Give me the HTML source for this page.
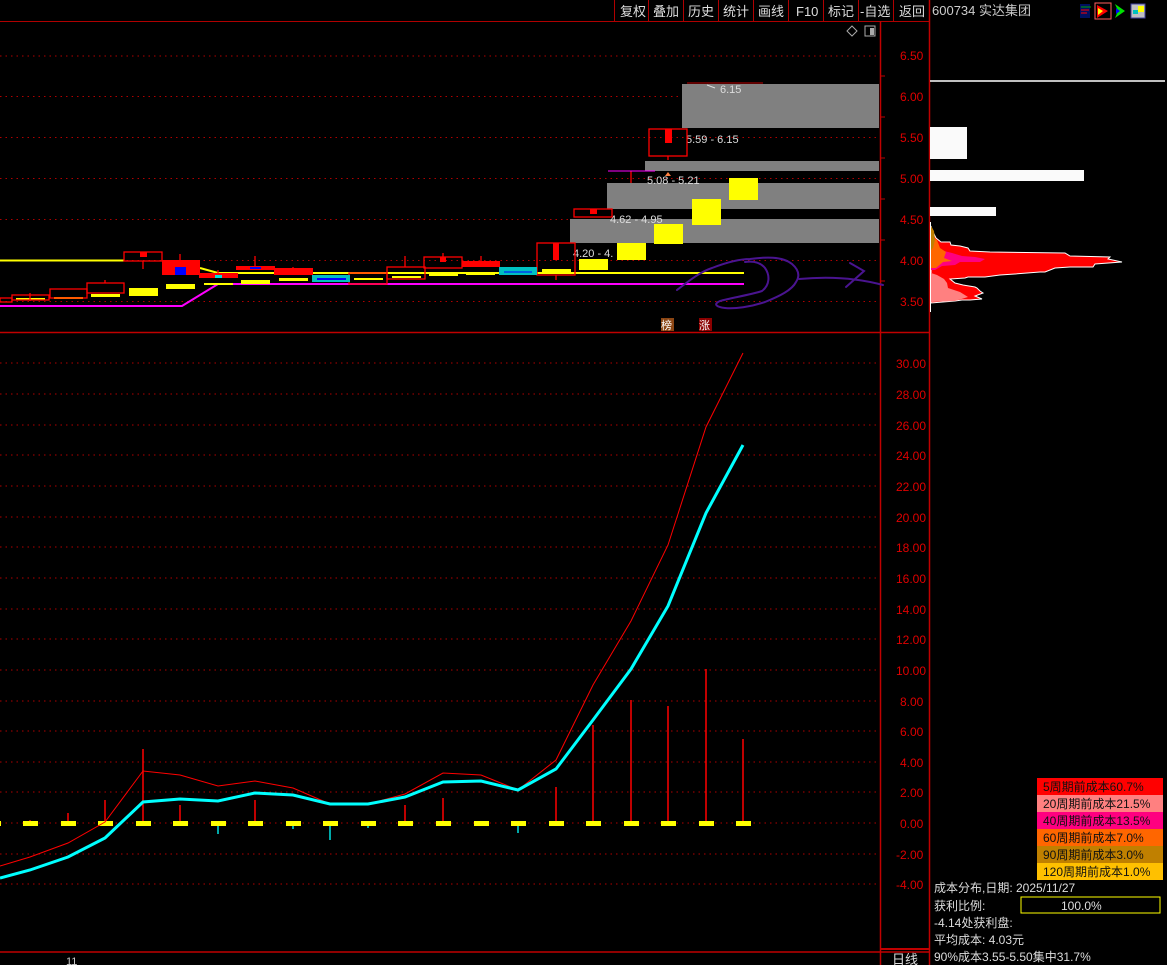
<!DOCTYPE html>
<html><head><meta charset="utf-8"><style>
body{margin:0;background:#000;width:1167px;height:965px;overflow:hidden;font-family:"Liberation Sans","Noto Sans CJK SC",sans-serif}
svg{position:absolute;left:0;top:0}
text{font-family:"Liberation Sans","Noto Sans CJK SC",sans-serif}
</style></head><body>
<svg width="1167" height="965" viewBox="0 0 1167 965">
<rect width="1167" height="965" fill="#000"/>
<g stroke="#b00000" stroke-width="1">
<line x1="0" y1="21.5" x2="929" y2="21.5"/>
<line x1="614.5" y1="0" x2="614.5" y2="21"/><line x1="648.5" y1="0" x2="648.5" y2="21"/><line x1="683.5" y1="0" x2="683.5" y2="21"/><line x1="718.5" y1="0" x2="718.5" y2="21"/><line x1="753.5" y1="0" x2="753.5" y2="21"/><line x1="788.5" y1="0" x2="788.5" y2="21"/><line x1="823.5" y1="0" x2="823.5" y2="21"/><line x1="858.5" y1="0" x2="858.5" y2="21"/><line x1="893.5" y1="0" x2="893.5" y2="21"/>
</g>
<g fill="#ddd" font-size="13">
<text x="620" y="16">复权</text><text x="653" y="16">叠加</text><text x="688" y="16">历史</text><text x="723" y="16">统计</text><text x="758" y="16">画线</text><text x="796" y="16">F10</text><text x="828" y="16">标记</text><text x="860" y="16">-自选</text><text x="899" y="16">返回</text>
</g>
<path d="M852 26l5 5-5 5-5-5z" fill="none" stroke="#aaa"/>
<rect x="865" y="26" width="10" height="10" fill="none" stroke="#aaa"/><rect x="870" y="28" width="4" height="7" fill="#aaa"/>
<g stroke="#c00000" stroke-width="1.5">
<line x1="880.5" y1="21" x2="880.5" y2="965"/><line x1="929.5" y1="0" x2="929.5" y2="965"/>
<line x1="0" y1="332.5" x2="929" y2="332.5"/><line x1="0" y1="952" x2="929" y2="952"/>
</g>
<line x1="880" y1="949" x2="929" y2="949" stroke="#c00000" stroke-width="2"/>
<g stroke="#b00000" stroke-dasharray="1.5 4" stroke-width="1">
<line x1="0" y1="56" x2="880" y2="56"/><line x1="0" y1="96.5" x2="880" y2="96.5"/><line x1="0" y1="137.5" x2="880" y2="137.5"/><line x1="0" y1="178.5" x2="880" y2="178.5"/><line x1="0" y1="219.5" x2="880" y2="219.5"/><line x1="0" y1="260.5" x2="880" y2="260.5"/><line x1="0" y1="301.5" x2="880" y2="301.5"/>
</g>
<g fill="#e00000" font-size="12">
<text x="900" y="60">6.50</text><text x="900" y="101">6.00</text><text x="900" y="142">5.50</text><text x="900" y="183">5.00</text><text x="900" y="224">4.50</text><text x="900" y="265">4.00</text><text x="900" y="306">3.50</text>
</g>
<g stroke="#c00000"><line x1="880" y1="76" x2="885" y2="76"/><line x1="880" y1="117" x2="885" y2="117"/><line x1="880" y1="158" x2="885" y2="158"/><line x1="880" y1="199" x2="885" y2="199"/><line x1="880" y1="240" x2="885" y2="240"/><line x1="880" y1="281" x2="885" y2="281"/></g>
<g fill="#808080">
<rect x="682" y="84" width="197" height="44"/><rect x="645" y="161" width="234" height="10"/><rect x="607" y="183" width="272" height="26"/><rect x="570" y="219" width="309" height="24"/>
</g>
<line x1="687" y1="83" x2="763" y2="83" stroke="#c00000"/>
<g fill="#ddd" font-size="11">
<text x="720" y="93">6.15</text><path d="M707 85l8 3" stroke="#ddd" fill="none"/>
<text x="686" y="143">5.59 - 6.15</text><text x="647" y="184">5.08 - 5.21</text><text x="610" y="223">4.62 - 4.95</text><text x="573" y="257">4.20 - 4.</text>
</g>
<polyline points="0,260.5 124,260.5" stroke="#ffff00" stroke-width="2" fill="none"/>
<polyline points="200,268 218,273 744,273" stroke="#ffff00" stroke-width="2" fill="none"/>
<polyline points="0,306 182,306 218,284 744,284" stroke="#ff00ff" stroke-width="2" fill="none"/>
<g fill="#ffff00">
<rect x="16" y="298" width="29" height="2"/><rect x="54" y="297" width="29" height="2"/><rect x="91" y="294" width="29" height="3"/><rect x="129" y="288" width="29" height="8"/><rect x="166" y="284" width="29" height="5"/><rect x="204" y="283" width="29" height="2"/><rect x="241" y="280" width="29" height="4"/><rect x="279" y="278" width="29" height="3"/><rect x="317" y="278" width="29" height="2"/><rect x="354" y="278" width="29" height="2"/><rect x="392" y="276" width="29" height="2"/><rect x="429" y="274" width="29" height="2"/><rect x="466" y="273" width="29" height="2"/><rect x="542" y="269" width="29" height="4"/>
<rect x="579" y="259" width="29" height="11"/><rect x="617" y="243" width="29" height="17"/><rect x="654" y="224" width="29" height="20"/><rect x="692" y="199" width="29" height="26"/><rect x="729" y="178" width="29" height="22"/>
</g>
<g stroke="#ff0000" stroke-width="1.3" fill="none">
<rect x="0" y="298" width="12" height="4"/><rect x="12" y="295" width="37" height="5"/><rect x="50" y="289" width="37" height="9"/><rect x="87" y="283" width="37" height="10"/><rect x="124" y="252" width="38" height="9"/>
<rect x="349" y="273" width="38" height="11"/><rect x="387" y="267" width="38" height="12"/><rect x="424" y="257" width="38" height="11"/>
<rect x="537" y="243" width="38" height="32"/><rect x="574" y="209" width="38" height="8"/><rect x="649" y="129" width="38" height="27"/>
<line x1="30" y1="293" x2="30" y2="301"/><line x1="105" y1="280" x2="105" y2="283"/><line x1="143" y1="261" x2="143" y2="269"/><line x1="180" y1="254" x2="180" y2="260"/><line x1="218" y1="270" x2="218" y2="273"/><line x1="255" y1="256" x2="255" y2="266"/><line x1="293" y1="267" x2="293" y2="268"/><line x1="405" y1="256" x2="405" y2="267"/><line x1="443" y1="253" x2="443" y2="257"/><line x1="481" y1="256" x2="481" y2="261"/><line x1="556" y1="275" x2="556" y2="280"/><line x1="631" y1="171" x2="631" y2="183"/><line x1="668" y1="156" x2="668" y2="160"/>
</g>
<g fill="#ff0000">
<rect x="140" y="252" width="7" height="5"/><rect x="162" y="260" width="38" height="15"/><rect x="199" y="273" width="39" height="5"/><rect x="236" y="266" width="39" height="4"/><rect x="274" y="268" width="39" height="7"/><rect x="440" y="257" width="6" height="5"/><rect x="462" y="261" width="38" height="6"/><rect x="553" y="243" width="6" height="17"/><rect x="590" y="209" width="7" height="5"/><rect x="665" y="129" width="7" height="14"/>
</g>
<rect x="175" y="267" width="11" height="8" fill="#0000ff"/><rect x="215" y="275" width="7" height="3" fill="#00e0e0"/><rect x="250" y="267" width="11" height="2" fill="#0000ff"/>
<rect x="312" y="275" width="38" height="7" fill="#00c0c0"/><line x1="317" y1="279" x2="346" y2="279" stroke="#0000ff" stroke-width="2"/>
<rect x="499" y="267" width="38" height="8" fill="#00c0c0"/><line x1="504" y1="272" x2="532" y2="272" stroke="#0000ff"/>
<line x1="608" y1="171" x2="655" y2="171" stroke="#ff00ff"/>
<path d="M665 176l3-4 3 4z" fill="#ff8040"/>
<g stroke="#4a1490" stroke-width="2" fill="none" stroke-linecap="round">
<path d="M677 290C690 280 700 272 712 268C725 263 738 259 750 259C765 257 782 256 792 264C799 270 800 276 796 282C792 290 780 296 765 302C750 307 735 309 725 308C716 307 713 304 720 301C730 298 750 295 762 291C770 285 770 275 765 268C760 262 752 261 745 262"/>
<path d="M799 279C820 277 850 276 883 285"/>
<path d="M850 263L864 271L846 287"/>
</g>
<rect x="661" y="318" width="13" height="13" fill="#8b4513"/><text x="661" y="329" font-size="11" fill="#fff">榜</text>
<rect x="699" y="318" width="13" height="13" fill="#8b0000"/><text x="699" y="329" font-size="11" fill="#fff">涨</text>
<g stroke="#b00000" stroke-dasharray="1.5 4">
<line x1="0" y1="363" x2="880" y2="363"/><line x1="0" y1="394" x2="880" y2="394"/><line x1="0" y1="425" x2="880" y2="425"/><line x1="0" y1="455" x2="880" y2="455"/><line x1="0" y1="486" x2="880" y2="486"/><line x1="0" y1="517" x2="880" y2="517"/><line x1="0" y1="547" x2="880" y2="547"/><line x1="0" y1="578" x2="880" y2="578"/><line x1="0" y1="609" x2="880" y2="609"/><line x1="0" y1="639" x2="880" y2="639"/><line x1="0" y1="670" x2="880" y2="670"/><line x1="0" y1="701" x2="880" y2="701"/><line x1="0" y1="731" x2="880" y2="731"/><line x1="0" y1="762" x2="880" y2="762"/><line x1="0" y1="792" x2="880" y2="792"/><line x1="0" y1="823" x2="880" y2="823"/><line x1="0" y1="854" x2="880" y2="854"/><line x1="0" y1="884" x2="880" y2="884"/>
</g>
<g fill="#e00000" font-size="12">
<text x="896" y="368">30.00</text><text x="896" y="399">28.00</text><text x="896" y="430">26.00</text><text x="896" y="460">24.00</text><text x="896" y="491">22.00</text><text x="896" y="522">20.00</text><text x="896" y="552">18.00</text><text x="896" y="583">16.00</text><text x="896" y="614">14.00</text><text x="896" y="644">12.00</text><text x="896" y="675">10.00</text><text x="900" y="706">8.00</text><text x="900" y="736">6.00</text><text x="900" y="767">4.00</text><text x="900" y="797">2.00</text><text x="900" y="828">0.00</text><text x="896" y="859">-2.00</text><text x="896" y="889">-4.00</text>
</g>
<g stroke="#ff0000" stroke-width="1.5">
<line x1="30" y1="820" x2="30" y2="823"/><line x1="68" y1="813" x2="68" y2="823"/><line x1="105" y1="800" x2="105" y2="823"/><line x1="143" y1="749" x2="143" y2="823"/><line x1="180" y1="805" x2="180" y2="823"/><line x1="255" y1="800" x2="255" y2="823"/><line x1="405" y1="805" x2="405" y2="823"/><line x1="443" y1="798" x2="443" y2="823"/><line x1="556" y1="787" x2="556" y2="823"/><line x1="593" y1="725" x2="593" y2="823"/><line x1="631" y1="700" x2="631" y2="823"/><line x1="668" y1="706" x2="668" y2="823"/><line x1="706" y1="669" x2="706" y2="823"/><line x1="743" y1="739" x2="743" y2="823"/>
</g>
<g stroke="#00e0e0" stroke-width="1.5">
<line x1="218" y1="823" x2="218" y2="834"/><line x1="293" y1="823" x2="293" y2="829"/><line x1="330" y1="823" x2="330" y2="840"/><line x1="368" y1="823" x2="368" y2="828"/><line x1="518" y1="823" x2="518" y2="833"/>
</g>
<g fill="#ffff00">
<rect x="-7" y="821" width="8" height="5"/><rect x="23" y="821" width="15" height="5"/><rect x="61" y="821" width="15" height="5"/><rect x="98" y="821" width="15" height="5"/><rect x="136" y="821" width="15" height="5"/><rect x="173" y="821" width="15" height="5"/><rect x="211" y="821" width="15" height="5"/><rect x="248" y="821" width="15" height="5"/><rect x="286" y="821" width="15" height="5"/><rect x="323" y="821" width="15" height="5"/><rect x="361" y="821" width="15" height="5"/><rect x="398" y="821" width="15" height="5"/><rect x="436" y="821" width="15" height="5"/><rect x="474" y="821" width="15" height="5"/><rect x="511" y="821" width="15" height="5"/><rect x="549" y="821" width="15" height="5"/><rect x="586" y="821" width="15" height="5"/><rect x="624" y="821" width="15" height="5"/><rect x="661" y="821" width="15" height="5"/><rect x="699" y="821" width="15" height="5"/><rect x="736" y="821" width="15" height="5"/>
</g>
<polyline points="0,866 30,857 68,843 105,822 143,771 180,775 218,786 255,781 293,788 330,804 368,804 405,794 443,773 481,775 518,790 556,760 593,685 631,621 668,545 706,427 743,353" stroke="#ff0000" stroke-width="1" fill="none"/>
<polyline points="0,878 30,870 68,857 105,838 143,802 180,799 218,801 255,793 293,795 330,804 368,804 405,797 443,782 481,781 518,790 556,769 593,720 631,669 668,606 706,513 743,445" stroke="#00ffff" stroke-width="3" fill="none"/>
<text x="66" y="965" font-size="11" fill="#ccc">11</text>
<text x="892" y="964" font-size="13" fill="#ddd">日线</text>
<text x="932" y="15" font-size="13" fill="#ccc">600734 实达集团</text>
<g>
<rect x="1080" y="4" width="10" height="14" fill="#001060"/><line x1="1081" y1="7" x2="1091" y2="7" stroke="#00a000"/><line x1="1081" y1="10" x2="1089" y2="10" stroke="#ff0000"/><line x1="1081" y1="13" x2="1087" y2="13" stroke="#ff0000"/>
<rect x="1095" y="3" width="16" height="16" fill="none" stroke="#ff6060"/><path d="M1097 5l11 6-11 7z" fill="#ff0000"/><path d="M1098 8l5 3-5 4z" fill="#ffff00"/>
<path d="M1115 4l10 7-10 7 3-7z" fill="#00e000"/><path d="M1116 8l4 3-4 3z" fill="#0000ff"/>
<rect x="1131" y="4" width="14" height="14" fill="#c0c0c0" stroke="#4040a0"/><rect x="1138" y="6" width="6" height="6" fill="#ffff00"/><rect x="1133" y="10" width="5" height="4" fill="#00c0c0"/>
</g>
<line x1="930" y1="81" x2="1165" y2="81" stroke="#fff" stroke-width="1.5"/>
<g fill="#fafafa"><rect x="930" y="127" width="37" height="32"/><rect x="930" y="170" width="154" height="11"/><rect x="930" y="207" width="66" height="9"/></g>
<path d="M931 226L933 232 936 238 941 242 950 242 951 245 960 246 968 248 970 251 990 252 1065 253 1070 256 1110 257 1108 259 1122 262 1095 264 1093 267 1070 267 1055 268 1050 270 1045 272 1040 272 1015 274 1000 275 985 277 968 277 965 278 950 279 955 283 963 285 975 287 977 288 980 291 983 293 975 296 982 299 970 300 962 300 955 301 943 302 931 303 931 226Z" fill="#ff0000" stroke="#fff"/>
<path d="M931 248L944 251 952 253 962 256 975 257 985 259 980 262 960 262 955 265 942 266 935 270 931 270Z" fill="#ff0080"/>
<path d="M931 236L937 240 940 248 946 252 944 258 952 261 943 262 936 268 931 268Z" fill="#ff6600"/>
<path d="M931 226L934 231 935 240 933 248 931 250Z" fill="#c08000"/>
<path d="M931 273L937 275 944 279 947 283 948 288 960 292 968 297 955 301 931 302Z" fill="#ff8080"/>
<line x1="930.5" y1="222" x2="930.5" y2="312" stroke="#fff"/>
<g font-size="12" fill="#111">
<rect x="1037" y="778" width="126" height="17" fill="#ff0000"/><text x="1043" y="791">5周期前成本60.7%</text>
<rect x="1037" y="795" width="126" height="17" fill="#ff8080"/><text x="1043" y="808">20周期前成本21.5%</text>
<rect x="1037" y="812" width="126" height="17" fill="#ff0080"/><text x="1043" y="825">40周期前成本13.5%</text>
<rect x="1037" y="829" width="126" height="17" fill="#ff6600"/><text x="1043" y="842">60周期前成本7.0%</text>
<rect x="1037" y="846" width="126" height="17" fill="#c08000"/><text x="1043" y="859">90周期前成本3.0%</text>
<rect x="1037" y="863" width="126" height="17" fill="#ffc000"/><text x="1043" y="876">120周期前成本1.0%</text>
</g>
<g font-size="12" fill="#ddd">
<text x="934" y="892">成本分布,日期: 2025/11/27</text>
<text x="934" y="910">获利比例:</text>
<rect x="1021" y="897" width="139" height="16" fill="none" stroke="#ffff00"/><text x="1061" y="910">100.0%</text>
<text x="934" y="927">-4.14处获利盘:</text>
<text x="934" y="944">平均成本: 4.03元</text>
<text x="934" y="961">90%成本3.55-5.50集中31.7%</text>
</g>
</svg>
</body></html>
